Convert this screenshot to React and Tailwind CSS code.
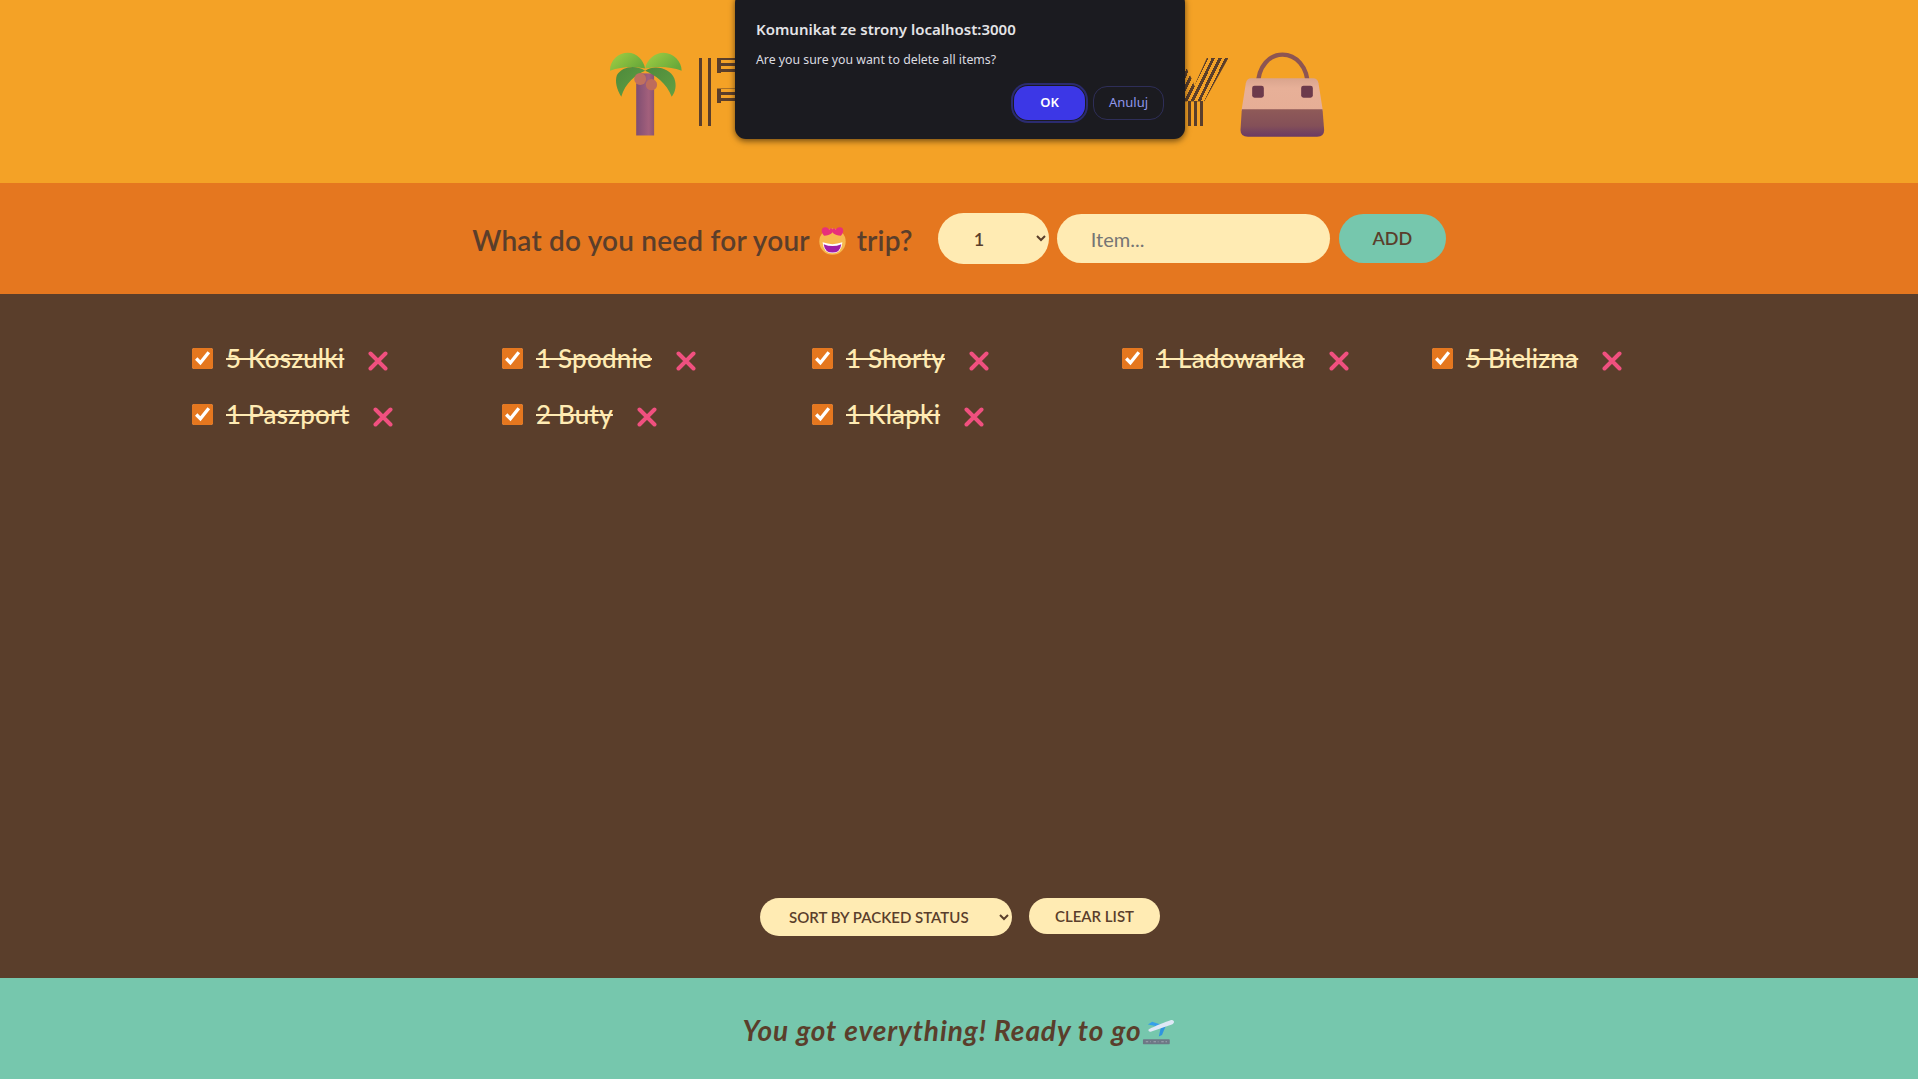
import React from "react";

const items = [
  ["5 Koszulki"],
  ["1 Spodnie"],
  ["1 Shorty"],
  ["1 Ladowarka"],
  ["5 Bielizna"],
  ["1 Paszport"],
  ["2 Buty"],
  ["1 Klapki"],
];

function Palm() {
  return (
    <svg viewBox="0 0 250 300" className="w-[83px] h-[100px] shrink-0 mb-[4px]">
      <defs>
        <linearGradient id="tr" x1="0" x2="1" y1="0" y2="0">
          <stop offset="0" stopColor="#7f4e72" />
          <stop offset="0.7" stopColor="#a3607c" />
          <stop offset="1" stopColor="#8c5570" />
        </linearGradient>
        <linearGradient id="lf1" x1="0" x2="1" y1="0" y2="0.6">
          <stop offset="0" stopColor="#a4d044" />
          <stop offset="1" stopColor="#68a93a" />
        </linearGradient>
        <linearGradient id="lf2" x1="0" x2="1" y1="0" y2="1">
          <stop offset="0" stopColor="#4d8a3c" />
          <stop offset="1" stopColor="#62a042" />
        </linearGradient>
      </defs>
      <rect x="103" y="100" width="54" height="187" fill="url(#tr)" />
      <path d="M24 92C24 60 50 38 78 38C105 38 125 60 130 85C100 78 60 78 24 92Z" fill="url(#lf1)" />
      <path d="M130 85C135 58 160 38 185 38C215 38 240 65 240 92C205 78 165 78 130 85Z" fill="url(#lf1)" />
      <path d="M130 92C100 72 60 80 45 105C38 125 45 150 58 170C70 130 100 105 130 92Z" fill="url(#lf2)" />
      <path d="M130 92C160 72 205 85 218 115C225 135 222 155 210 170C195 130 160 105 130 92Z" fill="url(#lf2)" />
      <circle cx="115" cy="117" r="18" fill="#c0705e" />
      <circle cx="149" cy="134" r="17" fill="#bd6c5c" />
    </svg>
  );
}

function Bag() {
  return (
    <svg viewBox="200 0 275 300" className="w-[92px] h-[100px] shrink-0 mb-[4px]">
      <defs>
        <linearGradient id="bg1" x1="0" x2="0" y1="0" y2="1">
          <stop offset="0" stopColor="#d9a48d" />
          <stop offset="0.3" stopColor="#e7b098" />
          <stop offset="1" stopColor="#e6ae96" />
        </linearGradient>
        <linearGradient id="bg2" x1="0" x2="0" y1="0" y2="1">
          <stop offset="0" stopColor="#8f5a58" />
          <stop offset="0.6" stopColor="#845058" />
          <stop offset="1" stopColor="#6a3a64" />
        </linearGradient>
      </defs>
      <path d="M262 140C262 75 300 44 336 44C375 44 412 78 412 140" fill="none" stroke="#8d5552" strokeWidth="13" />
      <path d="M242 115H428Q441 115 444 130L457 212H213L226 130Q229 115 242 115Z" fill="url(#bg1)" />
      <path d="M214 208H456L461 270Q461 290 440 290H232Q210 290 210 270Z" fill="url(#bg2)" />
      <rect x="245" y="137" width="35" height="36" rx="7" fill="#6c3a4b" />
      <rect x="392" y="137" width="35" height="36" rx="7" fill="#6c3a4b" />
    </svg>
  );
}

function Face() {
  return (
    <svg viewBox="0 0 90 90" className="inline-block w-[33px] h-[33px] align-[-6px]">
      <circle cx="45" cy="48" r="36" fill="#f7b84e" />
      <path d="M18 50Q45 60 72 50Q70 80 45 80Q20 80 18 50Z" fill="#fff" />
      <path d="M21 55Q45 65 69 55Q66 78 45 78Q24 78 21 55Z" fill="#a01fa8" />
      <path d="M22 32C12 22 14 8 26 9C31 9 34 12 36 16C38 12 42 10 45 14C50 22 40 30 22 32Z" fill="#e8307a" />
      <path d="M68 32C78 22 76 8 64 9C59 9 56 12 54 16C52 12 48 10 45 14C40 22 50 30 68 32Z" fill="#e8307a" />
    </svg>
  );
}

function Plane() {
  return (
    <svg viewBox="50 20 95 85" className="inline-block w-[34px] h-[30px] align-[-5px]">
      <rect x="52" y="86" width="76" height="14" rx="2" fill="#6d7785" />
      <path d="M60 93H74M82 93H96M104 93H120" stroke="#b9bec6" strokeWidth="2" strokeDasharray="7 5" />
      <path d="M104 46L97 78L106 74L120 40Z" fill="#2f94e0" />
      <path d="M78 36L66 44L96 50L102 44Z" fill="#35a0ea" />
      <path d="M68 58C66 62 70 66 76 64L134 44C142 40 142 32 134 31C128 31 76 52 68 58Z" fill="#dfe8f6" />
    </svg>
  );
}

function Cross() {
  return (
    <svg viewBox="0 0 20 20" className="w-[20px] h-[20px]">
      <path d="M2.5 2.5L17.5 17.5M17.5 2.5L2.5 17.5" stroke="#f0507f" strokeWidth="4" strokeLinecap="round" />
    </svg>
  );
}

export default function App() {
  return (
    <div className="relative h-screen flex flex-col overflow-hidden font-['Lato','Liberation_Sans',sans-serif] text-[#5a3e2b]">
      <header className="h-[183px] shrink-0 bg-[#f4a226] flex items-center justify-center pl-[13px]">
        <Palm />
        <h1 className="ml-[8px] mr-[4px] whitespace-nowrap font-['Inter',sans-serif] font-black text-[94px] leading-none tracking-[2.7px] uppercase">
          <span className="inline-block bg-clip-text text-transparent bg-no-repeat [background-image:repeating-linear-gradient(90deg,transparent_0_6px,#5a3e2b_6px_9.2px),repeating-linear-gradient(180deg,#5a3e2b_0_3px,transparent_3px_5.9px)] [background-size:28px_100%,100%_100%] [background-position:0_0,28px_0]">F</span>
          AR AWA
          <span className="inline-block bg-clip-text text-transparent bg-no-repeat [background-image:repeating-linear-gradient(116deg,#5a3e2b_0_3px,transparent_3px_6px),repeating-linear-gradient(90deg,#5a3e2b_0_3.2px,transparent_3.2px_6px)] [background-size:100%_60%,100%_40%] [background-position:0_0,0_100%]">Y</span>
        </h1>
        <Bag />
      </header>

      <form className="h-[111px] shrink-0 bg-[#e5771f] flex items-center justify-center">
        <h3 className="text-[28px] font-semibold tracking-[0.2px] mr-[25px] mt-[3px] whitespace-nowrap">
          What do you need for your <Face /> trip?
        </h3>
        <select defaultValue="1" className="w-[111px] h-[51px] rounded-full bg-[#ffebb3] border-0 pl-[32px] pr-[4px] text-[18px] font-semibold mr-[8px] font-['Lato',sans-serif]">
          <option value="1">1</option>
        </select>
        <input placeholder="Item..." className="w-[273px] h-[49px] rounded-full bg-[#ffebb3] border-0 px-[34px] text-[20px] mr-[9px] placeholder:text-[#757575]" />
        <button type="button" className="w-[107px] h-[49px] rounded-full bg-[#76c7ad] text-[18px] font-semibold">ADD</button>
      </form>

      <main className="flex-1 bg-[#5a3e2b] flex flex-col items-center min-h-0">
        <ul className="w-[1534px] grid grid-cols-5 gap-x-[16px] gap-y-[16px] pt-[46px] flex-1 content-start">
          {items.map(([t]) => (
            <li key={t} className="h-[40px] flex items-center">
              <input type="checkbox" defaultChecked className="w-[21px] h-[21px] m-0 accent-[#e5771f] mb-[4px]" />
              <span className="ml-[13px] text-[26px] leading-none font-medium text-[#ffebb3] line-through tracking-[0.2px] whitespace-nowrap mb-[4px]">{t}</span>
              <span className="ml-[24px] mt-[2px]"><Cross /></span>
            </li>
          ))}
        </ul>
        <div className="flex items-start gap-[17px] pb-[42px] pl-[2px]">
          <select defaultValue="packed" className="w-[252px] h-[38px] rounded-full bg-[#ffebb3] border-0 pl-[25px] pr-[2px] text-[15px] font-semibold font-['Lato',sans-serif] uppercase">
            <option value="packed">SORT BY PACKED STATUS</option>
          </select>
          <button type="button" className="w-[131px] h-[36px] rounded-full bg-[#ffebb3] text-[15px] font-semibold uppercase">Clear list</button>
        </div>
      </main>

      <footer className="h-[101px] shrink-0 bg-[#76c7ad] flex items-center justify-center">
        <em className="text-[28px] font-bold tracking-[0.9px] whitespace-nowrap mt-[3px]">You got everything! Ready to go<Plane /></em>
      </footer>

      <div role="alertdialog" className="absolute left-[735px] -top-[8px] w-[450px] h-[147px] rounded-[11px] bg-[#1b1b20] shadow-[0_2px_6px_rgba(0,0,0,0.55)] pt-[27px] px-[21px] font-['Noto_Sans',sans-serif]">
        <p className="text-[15px] leading-[20px] font-semibold text-[#e4e4e7]">Komunikat ze strony localhost:3000</p>
        <p className="mt-[11px] text-[12.3px] leading-[20px] text-[#dcdce0]">Are you sure you want to delete all items?</p>
        <div className="mt-[16px] flex justify-end gap-[8px]">
          <button type="button" className="w-[71px] h-[34px] rounded-[14px] bg-[#3c37e6] text-white text-[13px] font-semibold ring-2 ring-offset-1 ring-offset-[#1b1b20] ring-[#2b2b70]">OK</button>
          <button type="button" className="w-[71px] h-[34px] rounded-[14px] border border-[#2e2e58] text-[#8f96ea] text-[13px]">Anuluj</button>
        </div>
      </div>
    </div>
  );
}
